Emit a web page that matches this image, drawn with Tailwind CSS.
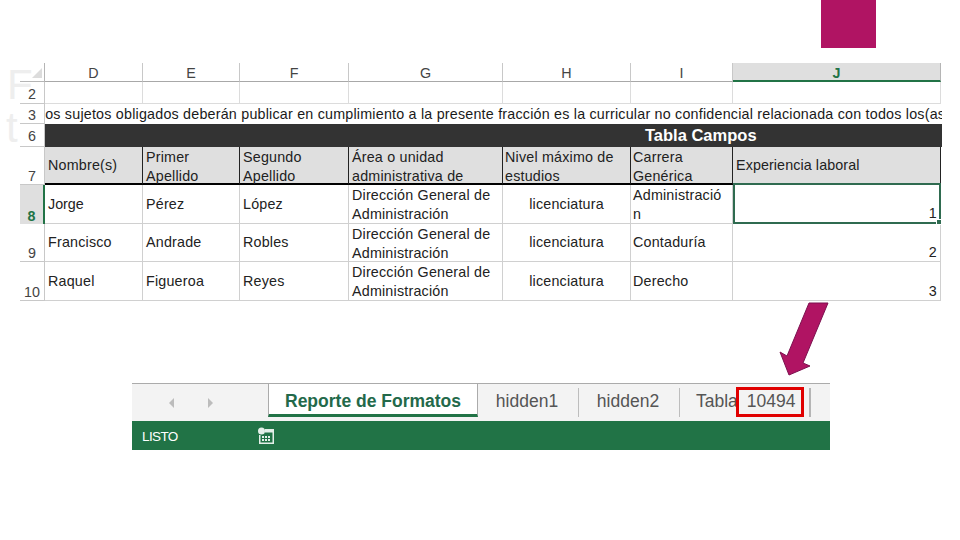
<!DOCTYPE html>
<html lang="es">
<head>
    <meta charset="UTF-8">
    <title>Tabla Campos</title>
    <script src="https://cdn.jsdelivr.net/npm/@tailwindcss/browser@4"></script>
</head>
<body class="bg-white">
<div class="relative w-[960px] h-[540px] overflow-hidden bg-white pt-[63px] font-['Liberation_Sans',sans-serif] text-[14.3px] leading-[19px] text-[#222]">

    <!-- titulo de la diapositiva, casi tapado por la hoja -->
    <span class="absolute left-[7px] top-[60px] text-[42px] leading-[50px] text-[#eeeeee]">F</span>
    <span class="absolute left-[6px] top-[103px] text-[42px] leading-[50px] text-[#eeeeee]">t</span>
    <!-- cuadro magenta -->
    <div class="absolute left-[821px] top-0 w-[55px] h-[48px] bg-[#b01463]"></div>

    <!-- hoja de calculo -->
    <div class="relative ml-[20px] w-[921px] grid grid-cols-[25px_98px_97px_109px_154px_128px_102px_208px] grid-rows-[19px_22px_20px_23px_38px_39px_38px_39px]">
        <!-- encabezado de columnas -->
        <div class="border-r border-b border-[#b5b5b5] flex items-end justify-end pr-[2px] pb-[3px]">
            <div class="w-0 h-0 border-l-[10px] border-l-transparent border-b-[10px] border-b-[#dcdcdc]"></div>
        </div>
        <div class="pt-px border-r border-b border-[#c8c8c8] border-b-[#a8a8a8] text-center text-[#444]">D</div>
        <div class="pt-px border-r border-b border-[#c8c8c8] border-b-[#a8a8a8] text-center text-[#444]">E</div>
        <div class="pt-px border-r border-b border-[#c8c8c8] border-b-[#a8a8a8] text-center text-[#444]">F</div>
        <div class="pt-px border-r border-b border-[#c8c8c8] border-b-[#a8a8a8] text-center text-[#444]">G</div>
        <div class="pt-px border-r border-b border-[#c8c8c8] border-b-[#a8a8a8] text-center text-[#444]">H</div>
        <div class="pt-px border-r border-b border-[#c8c8c8] border-b-[#a8a8a8] text-center text-[#444]">I</div>
        <div class="pt-px border-r border-b-2 border-r-[#b5b5b5] border-b-[#217346] bg-[#dfdfdf] text-center font-bold text-[#217346]">J</div>

        <!-- fila 2 -->
        <div class="border-r border-b border-[#c8c8c8] flex items-end justify-center pb-[1px] leading-[16px] text-[#444]">2</div>
        <div class="border-r border-b border-[#dcdcdc]"></div>
        <div class="border-r border-b border-[#dcdcdc]"></div>
        <div class="border-r border-b border-[#dcdcdc]"></div>
        <div class="border-r border-b border-[#dcdcdc]"></div>
        <div class="border-r border-b border-[#dcdcdc]"></div>
        <div class="border-r border-b border-[#dcdcdc]"></div>
        <div class="border-r border-b border-[#dcdcdc]"></div>

        <!-- fila 3 -->
        <div class="border-r border-b border-[#c8c8c8] flex items-end justify-center leading-[16px] text-[#444]">3</div>
        <div class="col-span-7 -mr-px overflow-hidden whitespace-nowrap text-[#1a1a1a]"><span class="block -ml-[8px] pt-px tracking-[0.21px]">Los sujetos obligados deberán publicar en cumplimiento a la presente fracción es la curricular no confidencial relacionada con todos los(as) servidores</span></div>

        <!-- fila 6 -->
        <div class="border-r border-b border-[#c8c8c8] flex items-end justify-center text-[#444]">6</div>
        <div class="col-span-7 -mr-px bg-[#333333] text-white font-bold text-[16.5px] leading-[23px] pl-[600px] whitespace-nowrap">Tabla Campos</div>

        <!-- fila 7 -->
        <div class="border-r border-b border-[#c8c8c8] flex items-end justify-center leading-[16px] text-[#444]">7</div>
        <div class="bg-[#dfdfdf] border-r border-b-2 border-r-[#222] border-b-black px-[3px] flex items-center tracking-[0.2px]">Nombre(s)</div>
        <div class="bg-[#dfdfdf] border-r border-b-2 border-r-[#222] border-b-black px-[3px] pt-[3px] flex items-center tracking-[0.2px]">Primer<br>Apellido</div>
        <div class="bg-[#dfdfdf] border-r border-b-2 border-r-[#222] border-b-black px-[3px] pt-[3px] flex items-center tracking-[0.2px]">Segundo<br>Apellido</div>
        <div class="bg-[#dfdfdf] border-r border-b-2 border-r-[#222] border-b-black px-[3px] pt-[3px] flex items-center tracking-[0.2px]">Área o unidad<br>administrativa de</div>
        <div class="bg-[#dfdfdf] border-r border-b-2 border-r-[#222] border-b-black pl-[2px] pt-[3px] flex items-center tracking-[0.2px]">Nivel máximo de<br>estudios</div>
        <div class="bg-[#dfdfdf] border-r border-b-2 border-r-[#222] border-b-black pl-[2px] pt-[3px] flex items-center tracking-[0.2px]">Carrera<br>Genérica</div>
        <div class="bg-[#dfdfdf] border-r border-b-2 border-r-[#222] border-b-black px-[3px] flex items-center tracking-[0.1px]">Experiencia laboral</div>

        <!-- fila 8 -->
        <div class="bg-[#dfdfdf] border-r-2 border-r-[#217346] flex items-end justify-center leading-[16px] font-bold text-[#217346]">8</div>
        <div class="border-r border-b border-[#d0d0d0] px-[3px] flex items-center">Jorge</div>
        <div class="border-r border-b border-[#d0d0d0] px-[3px] flex items-center tracking-[0.2px]">Pérez</div>
        <div class="border-r border-b border-[#d0d0d0] px-[3px] flex items-center tracking-[0.2px]">López</div>
        <div class="border-r border-b border-[#d0d0d0] px-[3px] pt-[2px] flex items-center tracking-[0.2px]">Dirección General de<br>Administración</div>
        <div class="border-r border-b border-[#d0d0d0] flex items-center justify-center tracking-[0.2px]">licenciatura</div>
        <div class="border-r border-b border-[#d0d0d0] pl-[2px] pt-[2px] flex items-center tracking-[0.2px]">Administració<br>n</div>
        <div class="relative border-2 border-[#2f6b50] -mt-[2px] flex items-end justify-end pr-[2px] leading-[17px] tracking-[0.2px]">1
            <span class="absolute -right-[3px] -bottom-[3px] w-[6px] h-[6px] bg-[#2f6b50] border border-white"></span>
        </div>

        <!-- fila 9 -->
        <div class="border-r border-b border-[#c8c8c8] flex items-end justify-center leading-[16px] text-[#444]">9</div>
        <div class="border-r border-b border-[#d0d0d0] px-[3px] flex items-center tracking-[0.2px]">Francisco</div>
        <div class="border-r border-b border-[#d0d0d0] px-[3px] flex items-center tracking-[0.2px]">Andrade</div>
        <div class="border-r border-b border-[#d0d0d0] px-[3px] flex items-center tracking-[0.2px]">Robles</div>
        <div class="border-r border-b border-[#d0d0d0] px-[3px] pt-[2px] flex items-center tracking-[0.2px]">Dirección General de<br>Administración</div>
        <div class="border-r border-b border-[#d0d0d0] flex items-center justify-center tracking-[0.2px]">licenciatura</div>
        <div class="border-r border-b border-[#d0d0d0] pl-[2px] flex items-center tracking-[0.2px]">Contaduría</div>
        <div class="border-r border-b border-[#d0d0d0] flex items-end justify-end pr-[3px] leading-[17px] tracking-[0.2px]">2</div>

        <!-- fila 10 -->
        <div class="border-r border-b border-[#c8c8c8] flex items-end justify-center leading-[16px] text-[#444]">10</div>
        <div class="border-r border-b border-[#d0d0d0] px-[3px] flex items-center tracking-[0.2px]">Raquel</div>
        <div class="border-r border-b border-[#d0d0d0] px-[3px] flex items-center tracking-[0.2px]">Figueroa</div>
        <div class="border-r border-b border-[#d0d0d0] px-[3px] flex items-center tracking-[0.2px]">Reyes</div>
        <div class="border-r border-b border-[#d0d0d0] px-[3px] pt-[2px] flex items-center tracking-[0.2px]">Dirección General de<br>Administración</div>
        <div class="border-r border-b border-[#d0d0d0] flex items-center justify-center tracking-[0.2px]">licenciatura</div>
        <div class="border-r border-b border-[#d0d0d0] pl-[2px] flex items-center tracking-[0.2px]">Derecho</div>
        <div class="border-r border-b border-[#d0d0d0] flex items-end justify-end pr-[3px] leading-[17px] tracking-[0.2px]">3</div>
    </div>

    <!-- pestañas y barra de estado -->
    <div class="ml-[132px] mt-[82px] w-[698px]">
        <div class="h-[38px] bg-[#f3f3f3] border-t border-[#ababab] flex items-stretch text-[17.5px] text-[#555]">
            <div class="w-[136px] flex items-center justify-center gap-[32px] pt-[1px] pr-[18px]">
                <svg width="7" height="10" viewBox="0 0 7 10"><path d="M6 0 L1 5 L6 10 Z" fill="#bcbcbc"/></svg>
                <svg width="7" height="10" viewBox="0 0 7 10"><path d="M1 0 L6 5 L1 10 Z" fill="#bcbcbc"/></svg>
            </div>
            <div class="w-[210px] -mt-px bg-white border-x border-t border-[#ababab] border-b-[3px] border-b-[#217346] mb-[4px] pt-[5px] flex items-center justify-center font-bold text-[#23694a] whitespace-nowrap">Reporte de Formatos</div>
            <div class="w-[101px] pt-[4px] pb-[4px]">
                <span class="block h-full text-center border-r border-[#bdbdbd] pr-[2px] leading-[26px]">hidden1</span>
            </div>
            <div class="w-[101px] pt-[4px] pb-[4px]">
                <span class="block h-full text-center border-r border-[#bdbdbd] pr-[2px] leading-[26px]">hidden2</span>
            </div>
            <div class="relative w-[150px] flex items-center pl-[16px] whitespace-nowrap pb-[3px] [word-spacing:4px]">
                <span>Tabla 10494</span>
                <span class="absolute right-[19px] top-[4px] w-[2px] h-[29px] bg-[#b5b5b5]"></span>
                <span class="absolute left-[56px] top-[3px] w-[68px] h-[30px] border-[3px] border-[#e00000]"></span>
            </div>
        </div>
        <div class="h-[29px] bg-[#217346] flex items-center text-white text-[13.5px] pl-[10px]">
            <span class="w-[115px] pt-[2px] tracking-[-0.6px]">LISTO</span>
            <svg width="18" height="18" viewBox="0 0 18 18">
                <circle cx="4.5" cy="4" r="3.5" fill="#e4efe9"/>
                <path d="M8 2 H17 V17 H2 V8 H3.5 V15.5 H15.5 V5.5 H8 Z" fill="#e4efe9"/>
                <path d="M5 9 H7 V11 H5 Z M8 9 H10 V11 H8 Z M11 9 H13 V11 H11 Z M5 12 H7 V14 H5 Z M8 12 H10 V14 H8 Z M11 12 H13 V14 H11 Z" fill="#e4efe9"/>
            </svg>
        </div>
    </div>

    <!-- flecha -->
    <svg class="absolute left-[775px] top-[300px]" width="60" height="80" viewBox="775 300 60 80">
        <polygon points="809,303 828,303 803,363 810,366 789,375 780,352 787,356" fill="#b01463" stroke="#7d1150" stroke-width="1"/>
    </svg>
</div>
</body>
</html>
